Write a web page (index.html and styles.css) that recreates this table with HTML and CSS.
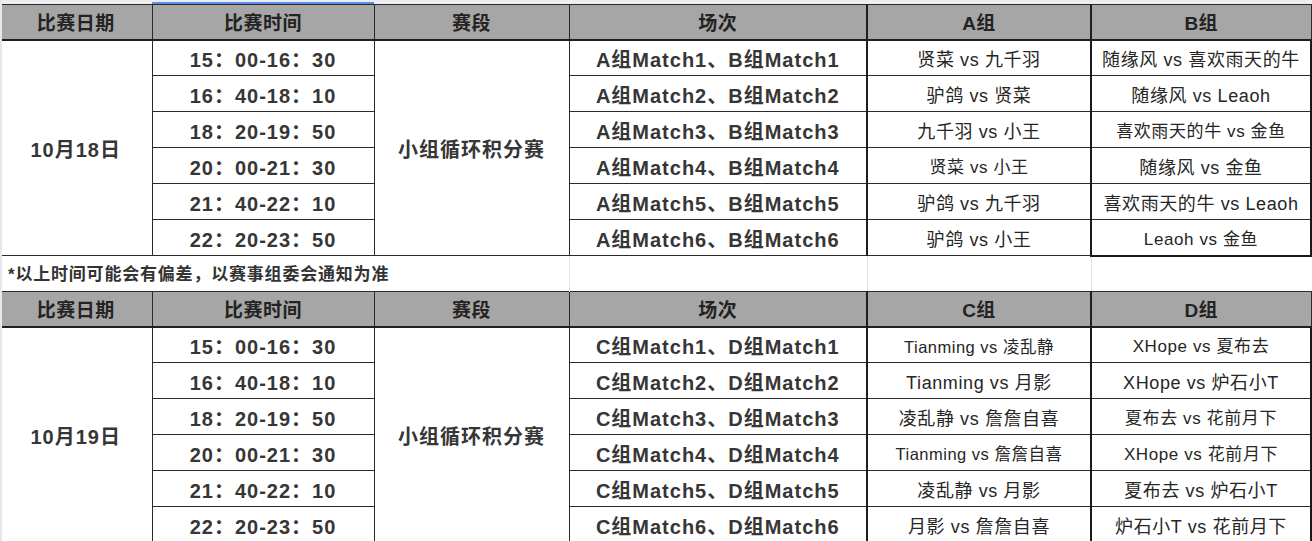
FILE: index.html
```html
<!DOCTYPE html>
<html lang="zh-CN">
<head>
<meta charset="utf-8">
<title>赛程表</title>
<link rel="stylesheet" href="styles.css">
</head>
<body>
<div class="strip"><span class="strip-pad"></span><span class="strip-sel"></span></div>
<table class="sched">
  <colgroup>
    <col class="c1"><col class="c2"><col class="c3"><col class="c4"><col class="c5"><col class="c6">
  </colgroup>
  <tbody>
    <tr class="hd">
      <th>比赛日期</th><th>比赛时间</th><th>赛段</th><th>场次</th><th class="g1">A组</th><th class="g2">B组</th>
    </tr>
    <tr>
      <td class="bold" rowspan="6">10月18日</td>
      <td class="bold">15：00-16：30</td>
      <td class="bold" rowspan="6">小组循环积分赛</td>
      <td class="bold">A组Match1、B组Match1</td>
      <td class="g1">贤菜 vs 九千羽</td>
      <td class="g2">随缘风 vs 喜欢雨天的牛</td>
    </tr>
    <tr>
      <td class="bold">16：40-18：10</td>
      <td class="bold">A组Match2、B组Match2</td>
      <td class="g1">驴鸽 vs 贤菜</td>
      <td class="g2">随缘风 vs Leaoh</td>
    </tr>
    <tr>
      <td class="bold">18：20-19：50</td>
      <td class="bold">A组Match3、B组Match3</td>
      <td class="g1">九千羽 vs 小王</td>
      <td class="g2 md">喜欢雨天的牛 vs 金鱼</td>
    </tr>
    <tr>
      <td class="bold">20：00-21：30</td>
      <td class="bold">A组Match4、B组Match4</td>
      <td class="g1 md">贤菜 vs 小王</td>
      <td class="g2">随缘风 vs 金鱼</td>
    </tr>
    <tr>
      <td class="bold">21：40-22：10</td>
      <td class="bold">A组Match5、B组Match5</td>
      <td class="g1">驴鸽 vs 九千羽</td>
      <td class="g2">喜欢雨天的牛 vs Leaoh</td>
    </tr>
    <tr class="last">
      <td class="bold">22：20-23：50</td>
      <td class="bold">A组Match6、B组Match6</td>
      <td class="g1">驴鸽 vs 小王</td>
      <td class="g2 md">Leaoh vs 金鱼</td>
    </tr>
    <tr class="note">
      <td class="note-text" colspan="3">*以上时间可能会有偏差，以赛事组委会通知为准</td>
      <td class="blank"></td><td class="blank"></td><td class="blank"></td>
    </tr>
    <tr class="hd">
      <th>比赛日期</th><th>比赛时间</th><th>赛段</th><th>场次</th><th class="g1">C组</th><th class="g2">D组</th>
    </tr>
    <tr>
      <td class="bold" rowspan="6">10月19日</td>
      <td class="bold">15：00-16：30</td>
      <td class="bold" rowspan="6">小组循环积分赛</td>
      <td class="bold">C组Match1、D组Match1</td>
      <td class="g1 sm">Tianming vs 凌乱静</td>
      <td class="g2 md">XHope vs 夏布去</td>
    </tr>
    <tr>
      <td class="bold">16：40-18：10</td>
      <td class="bold">C组Match2、D组Match2</td>
      <td class="g1">Tianming vs 月影</td>
      <td class="g2">XHope vs 炉石小T</td>
    </tr>
    <tr>
      <td class="bold">18：20-19：50</td>
      <td class="bold">C组Match3、D组Match3</td>
      <td class="g1">凌乱静 vs 詹詹自喜</td>
      <td class="g2 md">夏布去 vs 花前月下</td>
    </tr>
    <tr>
      <td class="bold">20：00-21：30</td>
      <td class="bold">C组Match4、D组Match4</td>
      <td class="g1 sm">Tianming vs 詹詹自喜</td>
      <td class="g2 md">XHope vs 花前月下</td>
    </tr>
    <tr>
      <td class="bold">21：40-22：10</td>
      <td class="bold">C组Match5、D组Match5</td>
      <td class="g1">凌乱静 vs 月影</td>
      <td class="g2">夏布去 vs 炉石小T</td>
    </tr>
    <tr>
      <td class="bold">22：20-23：50</td>
      <td class="bold">C组Match6、D组Match6</td>
      <td class="g1">月影 vs 詹詹自喜</td>
      <td class="g2">炉石小T vs 花前月下</td>
    </tr>
  </tbody>
</table>
</body>
</html>
```
FILE: styles.css
```css
html, body {
  margin: 0;
  padding: 0;
  background: #ffffff;
}

body {
  width: 1312px;
  overflow: hidden;
  font-family: "Liberation Sans", "Noto Sans CJK SC", sans-serif;
  color: #333333;
  border-left: 2px solid #e6e8eb;
  box-sizing: border-box;
}

.strip {
  display: flex;
  height: 4px;
  background: #eceef1;
  margin-left: -2px;
}

.strip-pad {
  width: 152px;
}

.strip-sel {
  width: 222px;
  height: 2px;
  margin-top: 2px;
  background: #5b8def;
}

.sched {
  border-collapse: collapse;
  table-layout: fixed;
  width: 1311px;
  margin-left: -2px;
}

.c1 { width: 152px; }
.c2 { width: 222px; }
.c3 { width: 195px; }
.c4 { width: 298px; }
.c5 { width: 224px; }
.c6 { width: 220px; }

.sched th,
.sched td {
  padding: 4px 0 0 0;
  text-align: center;
  vertical-align: middle;
  white-space: nowrap;
  border: 1px solid #2a2a2a;
  line-height: 1;
}

.sched tr {
  height: 36px;
}

.sched .hd {
  height: 35px;
}

.sched th {
  background: #a6a6a6;
  color: #232323;
  font-size: 19px;
  font-weight: bold;
  letter-spacing: 0.5px;
  border-bottom: 2px solid #1f1f1f;
}

.sched th:first-child,
.sched td.bold[rowspan] {
  border-left: none;
}

.sched td.bold {
  font-size: 20px;
  font-weight: bold;
  letter-spacing: 1px;
  color: #363636;
}

.sched td.g1 {
  font-size: 18px;
  letter-spacing: 0.6px;
  border-left: 2px solid #1f1f1f;
  color: #262626;
}

.sched td.g2 {
  font-size: 18px;
  letter-spacing: 0.6px;
  border-left: 2px solid #1a1a1a;
  border-right: 2px solid #1a1a1a;
  color: #262626;
}

.sched th.g1,
.sched th.g2 {
  border-left: 2px solid #1f1f1f;
}

.sched td.md {
  font-size: 17px;
}

.sched td.sm {
  font-size: 16.5px;
  letter-spacing: 0.5px;
}

.sched .last td.g2 {
  border-bottom: 2px solid #1a1a1a;
}

.sched .note {
  height: 36px;
}

.sched .note td {
  border: none;
  padding-top: 2px;
}

.sched .note td.note-text {
  text-align: left;
  padding-left: 8px;
  font-size: 17px;
  font-weight: bold;
  letter-spacing: 0.8px;
  color: #333333;
}

.sched .note td.blank {
  border-left: 1px solid #e2e2e2;
}
```
